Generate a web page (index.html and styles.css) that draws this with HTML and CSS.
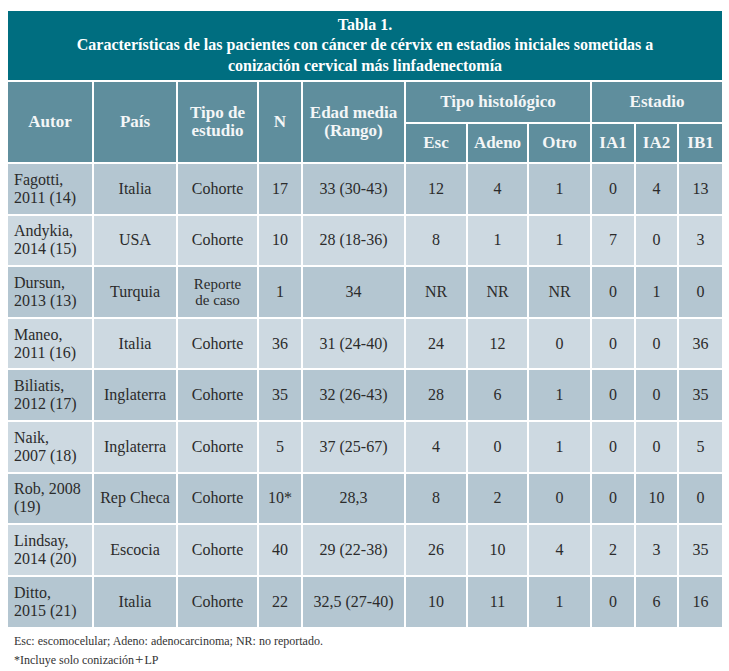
FILE: index.html
```html
<!DOCTYPE html>
<html lang="es">
<head>
<meta charset="utf-8">
<title>Tabla 1</title>
<link rel="stylesheet" href="styles.css">
</head>
<body>
<div class="wrap">
<table class="tbl">
<colgroup>
<col class="c-autor"><col class="c-pais"><col class="c-tipo"><col class="c-n"><col class="c-edad">
<col class="c-esc"><col class="c-adeno"><col class="c-otro"><col class="c-ia1"><col class="c-ia2"><col class="c-ib1">
</colgroup>
<thead>
<tr class="title-row"><th colspan="11">Tabla 1.<br>Características de las pacientes con cáncer de cérvix en estadios iniciales sometidas a<br>conización cervical más linfadenectomía</th></tr>
<tr class="h1">
<th rowspan="2">Autor</th><th rowspan="2">País</th><th rowspan="2">Tipo de<br>estudio</th><th rowspan="2">N</th><th rowspan="2">Edad media<br>(Rango)</th>
<th colspan="3">Tipo histológico</th><th colspan="3">Estadio</th>
</tr>
<tr class="h2"><th>Esc</th><th>Adeno</th><th>Otro</th><th>IA1</th><th>IA2</th><th>IB1</th></tr>
</thead>
<tbody>
<tr class="dark"><td class="a">Fagotti,<br>2011 (14)</td><td>Italia</td><td>Cohorte</td><td>17</td><td>33 (30-43)</td><td>12</td><td>4</td><td>1</td><td>0</td><td>4</td><td>13</td></tr>
<tr class="light"><td class="a">Andykia,<br>2014 (15)</td><td>USA</td><td>Cohorte</td><td>10</td><td>28 (18-36)</td><td>8</td><td>1</td><td>1</td><td>7</td><td>0</td><td>3</td></tr>
<tr class="dark"><td class="a">Dursun,<br>2013 (13)</td><td>Turquia</td><td class="sm">Reporte<br>de caso</td><td>1</td><td>34</td><td>NR</td><td>NR</td><td>NR</td><td>0</td><td>1</td><td>0</td></tr>
<tr class="light"><td class="a">Maneo,<br>2011 (16)</td><td>Italia</td><td>Cohorte</td><td>36</td><td>31 (24-40)</td><td>24</td><td>12</td><td>0</td><td>0</td><td>0</td><td>36</td></tr>
<tr class="dark"><td class="a">Biliatis,<br>2012 (17)</td><td>Inglaterra</td><td>Cohorte</td><td>35</td><td>32 (26-43)</td><td>28</td><td>6</td><td>1</td><td>0</td><td>0</td><td>35</td></tr>
<tr class="light"><td class="a">Naik,<br>2007 (18)</td><td>Inglaterra</td><td>Cohorte</td><td>5</td><td>37 (25-67)</td><td>4</td><td>0</td><td>1</td><td>0</td><td>0</td><td>5</td></tr>
<tr class="dark"><td class="a">Rob, 2008<br>(19)</td><td>Rep Checa</td><td>Cohorte</td><td>10*</td><td>28,3</td><td>8</td><td>2</td><td>0</td><td>0</td><td>10</td><td>0</td></tr>
<tr class="light"><td class="a">Lindsay,<br>2014 (20)</td><td>Escocia</td><td>Cohorte</td><td>40</td><td>29 (22-38)</td><td>26</td><td>10</td><td>4</td><td>2</td><td>3</td><td>35</td></tr>
<tr class="dark"><td class="a">Ditto,<br>2015 (21)</td><td>Italia</td><td>Cohorte</td><td>22</td><td>32,5 (27-40)</td><td>10</td><td>11</td><td>1</td><td>0</td><td>6</td><td>16</td></tr>
</tbody>
</table>
<div class="notes">
<p>Esc: escomocelular; Adeno: adenocarcinoma; NR: no reportado.</p>
<p>*Incluye solo conización<span class="plus">+</span>LP</p>
</div>
</div>
</body>
</html>
```

FILE: styles.css
```css
html, body { margin: 0; padding: 0; background: #ffffff; }
body { font-family: "Liberation Serif", "DejaVu Serif", serif; color: #2b2b2b; }
.wrap { padding: 11px 7px 0 8px; }
.tbl {
  width: 714px;
  border-collapse: collapse;
  table-layout: fixed;
}
.c-autor { width: 85px; }
.c-pais { width: 84px; }
.c-tipo { width: 81px; }
.c-n { width: 44px; }
.c-edad { width: 103px; }
.c-esc { width: 62px; }
.c-adeno { width: 61px; }
.c-otro { width: 63px; }
.c-ia1 { width: 44px; }
.c-ia2 { width: 43px; }
.c-ib1 { width: 44px; }

.title-row th {
  background: #006e80;
  color: #ffffff;
  font-size: 16px;
  font-weight: bold;
  line-height: 20.5px;
  height: 69px;
  padding: 0;
  text-align: center;
  border: none;
  border-bottom: 2px solid #ffffff;
}
.h1 th, .h2 th {
  background: #5f8e9d;
  color: #f4f6f7;
  font-weight: bold;
  font-size: 17px;
  line-height: 18px;
  padding: 0;
  text-align: center;
  border: 2px solid #ffffff;
}
.h1 { height: 42px; }
.h2 { height: 40px; }
.tbl th:first-child, .tbl td:first-child { border-left: none; }
.tbl th:last-child, .tbl td:last-child { border-right: none; }
.h2 th:first-child { border-left: 2px solid #ffffff; }

.tbl td {
  font-size: 16px;
  line-height: 18px;
  text-align: center;
  padding: 0;
  border: 2px solid #ffffff;
  color: #2b2b2b;
}
.tbl tbody tr { height: 51.6px; }
.tbl tbody tr:last-child td { border-bottom: none; }
.tbl td.a { text-align: left; padding-left: 6px; }
.tbl td.sm { font-size: 15px; line-height: 16px; }
.dark td { background: #b4c6d1; }
.light td { background: #cdd9e1; }

.notes { padding: 5px 0 0 6px; font-size: 12px; line-height: 19px; color: #333333; }
.notes p { margin: 0; }
.plus { font-size: 15px; line-height: 12px; padding: 0 1px; }
```
